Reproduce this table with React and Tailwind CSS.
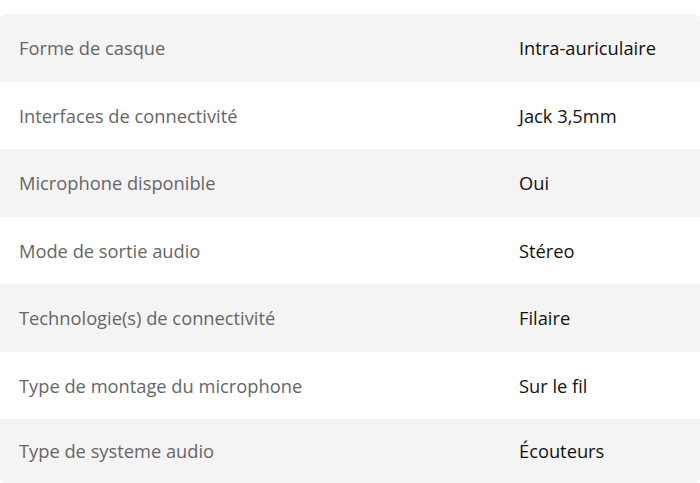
const rows = [
  ['Forme de casque', 'Intra-auriculaire'],
  ['Interfaces de connectivité', 'Jack 3,5mm'],
  ['Microphone disponible', 'Oui'],
  ['Mode de sortie audio', 'Stéreo'],
  ['Technologie(s) de connectivité', 'Filaire'],
  ['Type de montage du microphone', 'Sur le fil'],
  ['Type de systeme audio', 'Écouteurs'],
];

export default function App() {
  return (
    <div className="bg-white pt-[14px] h-[483px] overflow-hidden" style={{ fontFamily: '"Open Sans", sans-serif' }}>
      <div className="rounded-md overflow-hidden">
        {rows.map(([label, value], i) => (
          <div
            key={label}
            className={`flex items-center text-[18.3px] ${i === rows.length - 1 ? 'h-[64px]' : 'h-[67.5px]'} ${i % 2 === 0 ? 'bg-[#f4f4f4]' : 'bg-white'}`}
          >
            <div className="w-[519px] pl-[19px] text-[#666666]">{label}</div>
            <div className="text-[#111111]">{value}</div>
          </div>
        ))}
      </div>
    </div>
  );
}
